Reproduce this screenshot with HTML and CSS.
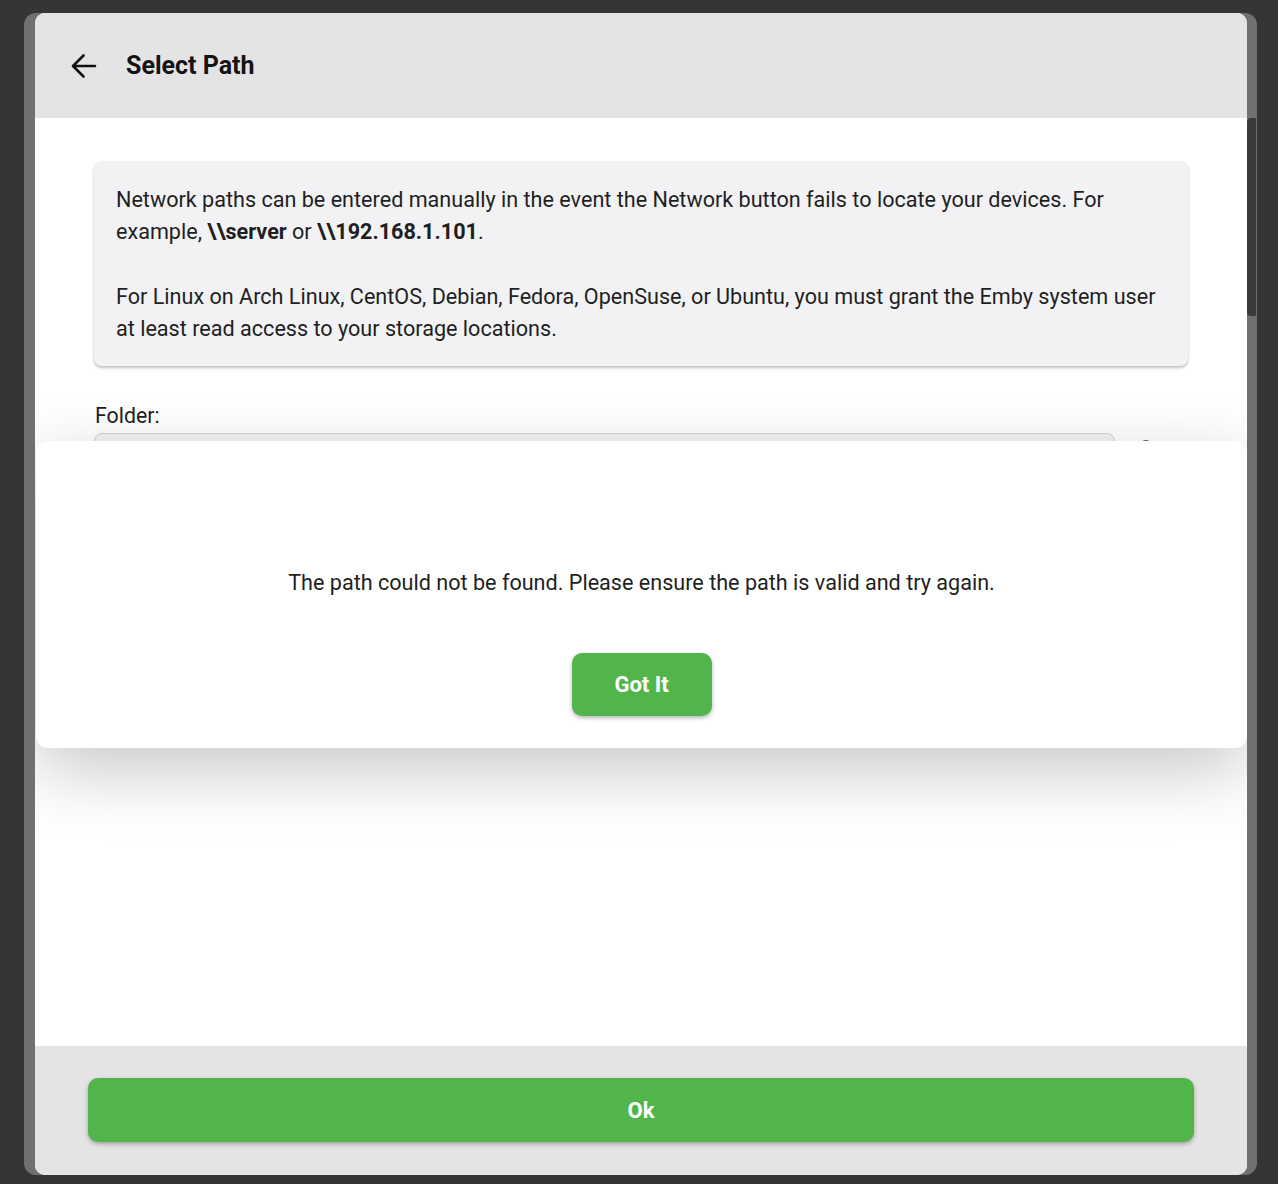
FILE: index.html
```html
<!DOCTYPE html>
<html>
<head>
<meta charset="utf-8">
<link rel="stylesheet" href="styles.css">
</head>
<body>
<div class="stage">
  <div class="backdrop">
    <div class="scrollthumb"></div>
    <div class="dialog">
      <div class="header">
        <button class="back" aria-label="Back">
          <svg width="26" height="26" viewBox="0 0 26 26"><path d="M24 13H2.5M12.5 2.5L2 13l10.5 10.5" fill="none" stroke="#111" stroke-width="2.6" stroke-linecap="round" stroke-linejoin="round"/></svg>
        </button>
        <h1 class="title">Select Path</h1>
      </div>
      <div class="content">
        <div class="info">
          <p>Network paths can be entered manually in the event the Network button fails to locate your devices. For example, <b>\\server</b> or <b>\\192.168.1.101</b>.</p>
          <p>For Linux on Arch Linux, CentOS, Debian, Fedora, OpenSuse, or Ubuntu, you must grant the Emby system user at least read access to your storage locations.</p>
        </div>
        <div class="field">
          <label class="label">Folder:</label>
          <div class="inputrow">
            <div class="input"></div>
            <svg class="searchicon" width="26" height="26" viewBox="0 0 24 24"><circle cx="10" cy="10" r="6" fill="none" stroke="#222" stroke-width="2"/><path d="M14.5 14.5L20 20" stroke="#222" stroke-width="2"/></svg>
          </div>
        </div>
      </div>
      <div class="footer">
        <button class="okbtn">Ok</button>
      </div>
      <div class="alert">
        <p class="alerttext">The path could not be found. Please ensure the path is valid and try again.</p>
        <button class="gotit">Got It</button>
      </div>
    </div>
  </div>
</div>
</body>
</html>
```
FILE: styles.css
```css
* { box-sizing: border-box; }
html, body { margin: 0; padding: 0; }
body {
  background: #353535;
  font-family: Roboto, "Noto Sans", sans-serif;
  color: #1f1f1f;
  width: 1278px;
  height: 1184px;
  overflow: hidden;
}
.stage {
  padding: 13px 21px 9px 24px;
  height: 1184px;
}
.backdrop {
  position: relative;
  background: #707070;
  border-radius: 12px;
  padding: 0 10px 0 11px;
  height: 1162px;
}
.scrollthumb {
  position: absolute;
  right: 1px;
  top: 105px;
  width: 9px;
  height: 198px;
  background: #3b3b3b;
  border-radius: 4px 0 0 4px;
}
.dialog {
  position: relative;
  height: 1162px;
  display: flex;
  flex-direction: column;
  background: #fff;
  border-radius: 10px;
  overflow: hidden;
}
.header {
  height: 105px;
  flex: none;
  background: #e4e4e4;
  display: flex;
  align-items: center;
  padding-left: 36px;
}
.back {
  border: 0;
  background: none;
  padding: 0;
  width: 26px;
  height: 26px;
  display: flex;
  margin-top: 1px;
}
.title {
  margin: 0 0 0 29px;
  font-size: 25px;
  font-weight: 700;
  color: #141414;
}
.content {
  flex: 1;
  padding: 43px 59px 0;
}
.info {
  background: #f2f2f4;
  border-radius: 8px;
  padding: 23px 22px 21px 22px;
  box-shadow: 0 2px 3px rgba(0,0,0,0.25);
  font-size: 21.6px;
  line-height: 32.3px;
}
.info p { margin: 0; }
.info p + p { margin-top: 32.3px; }
.field { margin-top: 38px; }
.label {
  display: block;
  font-size: 21.3px;
  line-height: 24px;
  padding-left: 1px;
}
.inputrow {
  display: flex;
  align-items: flex-start;
  margin-top: 5px;
}
.input {
  width: 1021px;
  height: 50px;
  border: 1px solid #cfcfcf;
  border-radius: 8px;
  background: #f4f4f4;
}
.searchicon { margin: 4px 0 0 20px; }
.footer {
  flex: none;
  height: 129px;
  background: #e4e4e4;
  padding: 32px 53px 33px;
}
.okbtn, .gotit {
  border: 0;
  background: #52b54b;
  color: #fff;
  font-family: Roboto, "Noto Sans", sans-serif;
  font-weight: 700;
  font-size: 22px;
  border-radius: 10px;
  box-shadow: 0 2px 4px rgba(0,0,0,0.3);
}
.okbtn {
  width: 100%;
  height: 64px;
}
.alert {
  position: absolute;
  left: 1px;
  right: 0;
  top: 428px;
  height: 307px;
  background: #fff;
  border-radius: 12px;
  box-shadow: 0 22px 70px rgba(0,0,0,0.22);
  text-align: center;
  padding-top: 127px;
}
.alerttext {
  margin: 0;
  font-size: 21.6px;
  line-height: 30px;
}
.gotit {
  margin-top: 55px;
  width: 140px;
  height: 63px;
}
```
